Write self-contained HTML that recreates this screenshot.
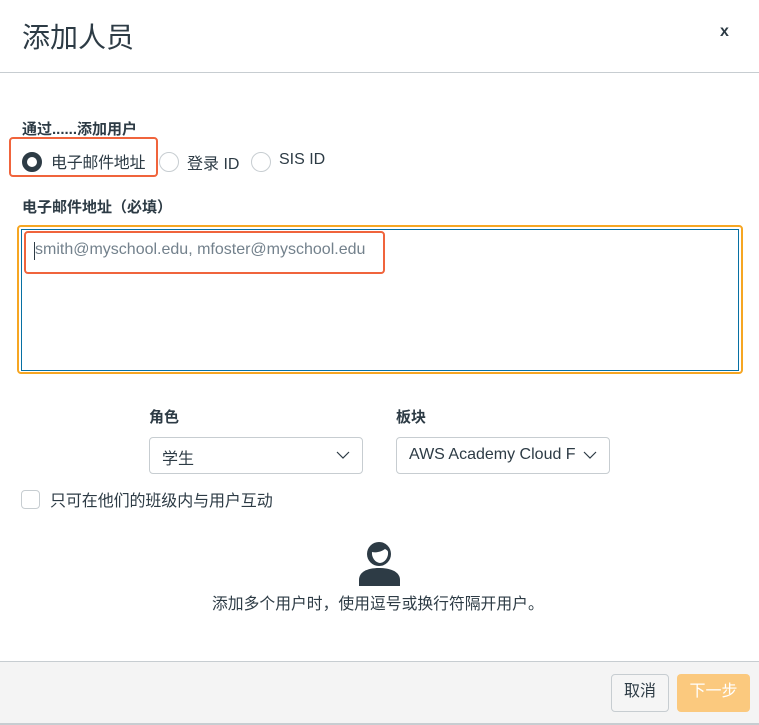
<!DOCTYPE html>
<html><head><meta charset="utf-8"><style>
*{margin:0;padding:0;box-sizing:border-box}
body{width:759px;height:725px;position:relative;background:#fff;font-family:"Liberation Sans","Noto Sans CJK SC",sans-serif;color:#2d3b45;overflow:hidden}
.a{position:absolute;white-space:nowrap}
.b{font-weight:bold;font-size:15px}
.r{position:absolute;width:20px;height:20px;border-radius:50%;border:1px solid #c7cdd1;background:#fff}
.sel{position:absolute;height:37px;border:1px solid #c7cdd1;border-radius:4px;font-size:16px;padding:7px 12px}
</style></head><body>
<div class="a" style="left:22px;top:16px;font-size:28px;color:#2d3b45">添加人员</div>
<div class="a" style="left:720px;top:23px;font-size:16px;font-weight:bold">x</div>
<div class="a" style="left:0;top:72px;width:759px;height:1px;background:#c7cdd1"></div>

<div class="a b" style="left:22px;top:118px">通过......添加用户</div>
<div class="a" style="left:9px;top:137px;width:149px;height:40px;border:2px solid #f0643c;border-radius:4px"></div>
<div class="r" style="left:22px;top:152px;border:5px solid #2d3b45"></div>
<div class="a" style="left:51px;top:149px;font-size:16px;letter-spacing:-0.3px">电子邮件地址</div>
<div class="r" style="left:159px;top:152px"></div>
<div class="a" style="left:187px;top:150px;font-size:16px">登录 ID</div>
<div class="r" style="left:251px;top:152px"></div>
<div class="a" style="left:279px;top:151px;font-size:16px">SIS ID</div>

<div class="a b" style="left:22px;top:196px">电子邮件地址（必填）</div>
<div class="a" style="left:17px;top:225px;width:726px;height:149px;border:2px solid #f6a623;border-radius:4px"></div>
<div class="a" style="left:21px;top:229px;width:718px;height:142px;border:1px solid #0770a3"></div>
<div class="a" style="left:24px;top:231px;width:361px;height:43px;border:2px solid #f0643c;border-radius:4px"></div>
<div class="a" style="left:34px;top:242px;width:1px;height:18px;background:#2d3b45"></div>
<div class="a" style="left:35px;top:241px;font-size:16px;color:#73818c">smith@myschool.edu, mfoster@myschool.edu</div>

<div class="a b" style="left:149px;top:406px">角色</div>
<div class="a b" style="left:396px;top:406px">板块</div>
<div class="sel" style="left:149px;top:437px;width:214px">学生</div>
<div class="sel" style="left:396px;top:437px;width:214px;padding-top:8px">AWS Academy Cloud F</div>
<svg class="a" style="left:336px;top:451px" width="14" height="9"><path d="M1 1l6 6 6-6" fill="none" stroke="#2d3b45" stroke-width="1.2"/></svg>
<svg class="a" style="left:583px;top:451px" width="14" height="9"><path d="M1 1l6 6 6-6" fill="none" stroke="#2d3b45" stroke-width="1.2"/></svg>

<div class="a" style="left:21px;top:490px;width:19px;height:19px;border:1px solid #c7cdd1;border-radius:4px"></div>
<div class="a" style="left:50px;top:487px;font-size:16px;letter-spacing:-0.1px">只可在他们的班级内与用户互动</div>

<svg class="a" style="left:357px;top:540px" width="46" height="46" viewBox="0 0 46 46">
<circle cx="22" cy="14" r="12" fill="#2d3b45"/>
<path d="M15 12c4 1 9 0 13-3 2 1 3 2 3 3a9 10 0 0 1-8 11a9 10 0 0 1-8-11z" fill="#fff"/>
<path d="M2 46v-6c0-8 8-12 20-12s21 4 21 12v6z" fill="#2d3b45"/>
</svg>
<div class="a" style="left:212px;top:591px;font-size:15.8px">添加多个用户时，使用逗号或换行符隔开用户。</div>

<div class="a" style="left:0;top:661px;width:759px;height:64px;background:#f4f4f4;border-top:1px solid #c7cdd1"></div>
<div class="a" style="left:0;top:723px;width:759px;height:2px;background:#c7cdd1"></div>
<div class="a" style="left:611px;top:674px;width:58px;height:38px;border:1px solid #c7cdd1;border-radius:4px;background:#f5f5f5;font-size:16px;text-align:center;line-height:34px">取消</div>
<div class="a" style="left:677px;top:674px;width:73px;height:38px;border-radius:4px;background:#fbc97e;color:#fff;font-size:16px;text-align:center;line-height:36px">下一步</div>
</body></html>
